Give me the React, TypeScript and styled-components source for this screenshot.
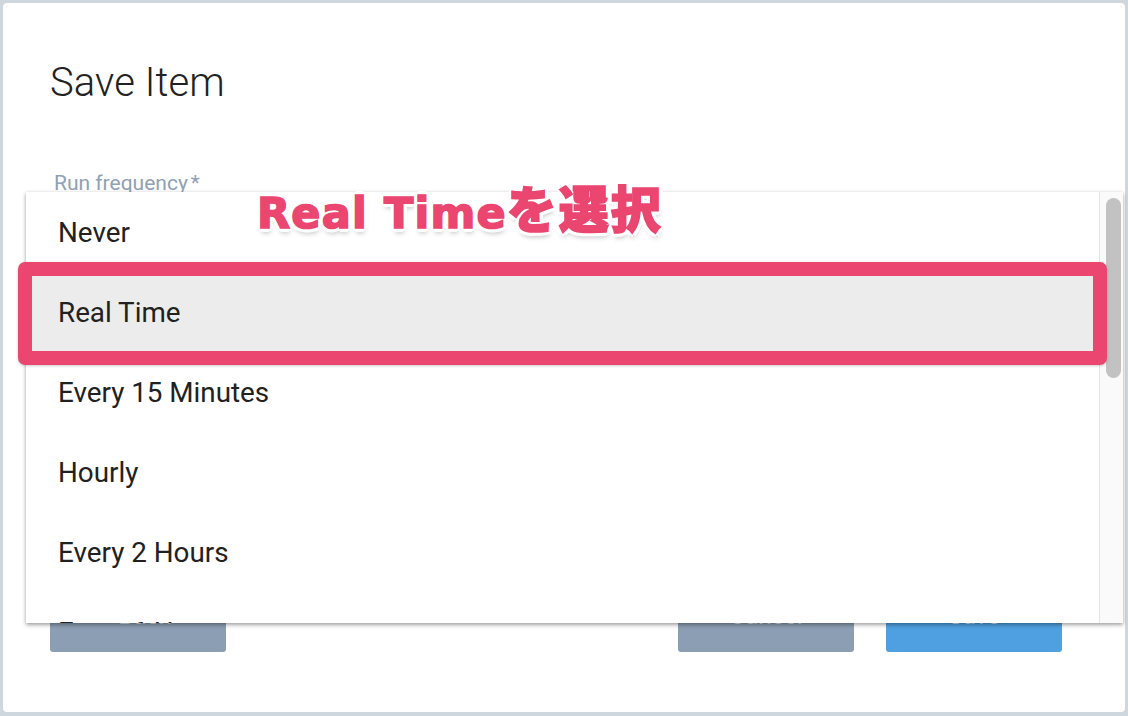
import React from "react";
import styled, { createGlobalStyle } from "styled-components";

const Global = createGlobalStyle`
  html, body { margin: 0; padding: 0; }
  body {
    background: #cfd7de;
    font-family: Roboto, "Noto Sans", "Liberation Sans", sans-serif;
    overflow: hidden;
  }
`;

const Page = styled.div`
  width: 1128px;
  height: 716px;
  box-sizing: border-box;
  padding: 3px 3px 4px 3px;
`;

const Dialog = styled.div`
  position: relative;
  width: 100%;
  height: 100%;
  background: #fff;
  border-radius: 4px;
  box-sizing: border-box;
  padding: 52px 63px 0 47px;
  display: flex;
  flex-direction: column;
`;

const Title = styled.h2`
  margin: 0;
  font-family: Roboto, sans-serif;
  font-weight: 300;
  font-size: 40px;
  line-height: 56px;
  color: #222;
  letter-spacing: 0.1px;
`;

const Field = styled.div`
  margin-top: 60px;
  padding-left: 4px;
  display: flex;
  flex-direction: column;
  height: 400px;
`;

const Label = styled.label`
  font-size: 21px;
  line-height: 24px;
  color: #8fa1b5;
  display: flex;
  gap: 3px;
`;

const Footer = styled.div`
  display: flex;
  justify-content: space-between;
  align-items: flex-end;
  margin-top: auto;
  margin-bottom: 60px;
`;

const Group = styled.div`
  display: flex;
  gap: 32px;
`;

const Button = styled.button<{ $primary?: boolean }>`
  width: 176px;
  height: 64px;
  border: none;
  border-radius: 3px;
  background: ${(p) => (p.$primary ? "#4fa0e0" : "#8c9eb3")};
  color: rgba(255, 255, 255, 0.75);
  font-family: Roboto, sans-serif;
  font-size: 24px;
  display: flex;
  align-items: center;
  justify-content: center;
  gap: 8px;
  padding: 0 0 8px;
`;

const Menu = styled.div`
  position: absolute;
  left: 23px;
  top: 189px;
  width: 1097px;
  height: 431px;
  background: #fff;
  box-shadow: 0 2px 4px rgba(0, 0, 0, 0.35), 0 0 3px rgba(0, 0, 0, 0.08);
  display: flex;
  overflow: hidden;
`;

const List = styled.ul`
  flex: 1;
  margin: 0;
  padding: 0;
  list-style: none;
  overflow: hidden;
`;

const Item = styled.li<{ $selected?: boolean }>`
  height: 80px;
  display: flex;
  align-items: center;
  padding-left: 32px;
  font-size: 27.8px;
  color: #212121;
  background: ${(p) => (p.$selected ? "#ececec" : "transparent")};
`;

const Track = styled.div`
  width: 24px;
  background: #fafafa;
  border-left: 1px solid #e4e4e4;
  box-sizing: border-box;
  padding: 6px 2px 0 6px;
`;

const Thumb = styled.div`
  height: 180px;
  background: #c2c2c2;
  border-radius: 8px;
`;

const Highlight = styled.div`
  position: absolute;
  left: 15px;
  top: 259px;
  width: 1089px;
  height: 103px;
  box-sizing: border-box;
  border: 14px solid #ea4670;
  border-radius: 7px;
  box-shadow: 0 1px 3px rgba(0, 0, 0, 0.2);
`;

const Note = styled.div`
  position: absolute;
  left: 254px;
  top: 175px;
  font-family: "DejaVu Sans", "Noto Sans CJK JP", sans-serif;
  font-weight: 700;
  font-size: 43px;
  line-height: 56px;
  color: #ea4670;
  letter-spacing: 1.2px;
  white-space: nowrap;
  -webkit-text-stroke: 1.6px #ea4670;
  text-shadow:
    -4px 0 0 #fff, 4px 0 0 #fff, 0 -4px 0 #fff, 0 4px 0 #fff,
    -3px -3px 0 #fff, 3px -3px 0 #fff, -3px 3px 0 #fff, 3px 3px 0 #fff,
    1px 5px 5px rgba(0, 0, 0, 0.25);
`;

const Jp = styled.span`
  font-family: "Noto Sans CJK JP", sans-serif;
  font-weight: 900;
  font-size: 50px;
  letter-spacing: 2px;
`;

const items = [
  "Never",
  "Real Time",
  "Every 15 Minutes",
  "Hourly",
  "Every 2 Hours",
  "Every 6 Hours",
  "Every 12 Hours",
  "Daily",
  "Weekly",
  "Every 2 Weeks",
  "Monthly",
  "Quarterly",
  "Yearly",
];

export default function App() {
  return (
    <>
      <Global />
      <Page>
        <Dialog>
          <Title>Save Item</Title>
          <Field>
            <Label>
              <span>Run frequency</span>
              <span>*</span>
            </Label>
          </Field>
          <Footer>
            <Button>‹ Back</Button>
            <Group>
              <Button>Cancel</Button>
              <Button $primary>Save</Button>
            </Group>
          </Footer>
          <Menu>
            <List>
              {items.map((t) => (
                <Item key={t} $selected={t === "Real Time"}>
                  {t}
                </Item>
              ))}
            </List>
            <Track>
              <Thumb />
            </Track>
          </Menu>
          <Highlight />
          <Note>
            Real Time<Jp>を選択</Jp>
          </Note>
        </Dialog>
      </Page>
    </>
  );
}
